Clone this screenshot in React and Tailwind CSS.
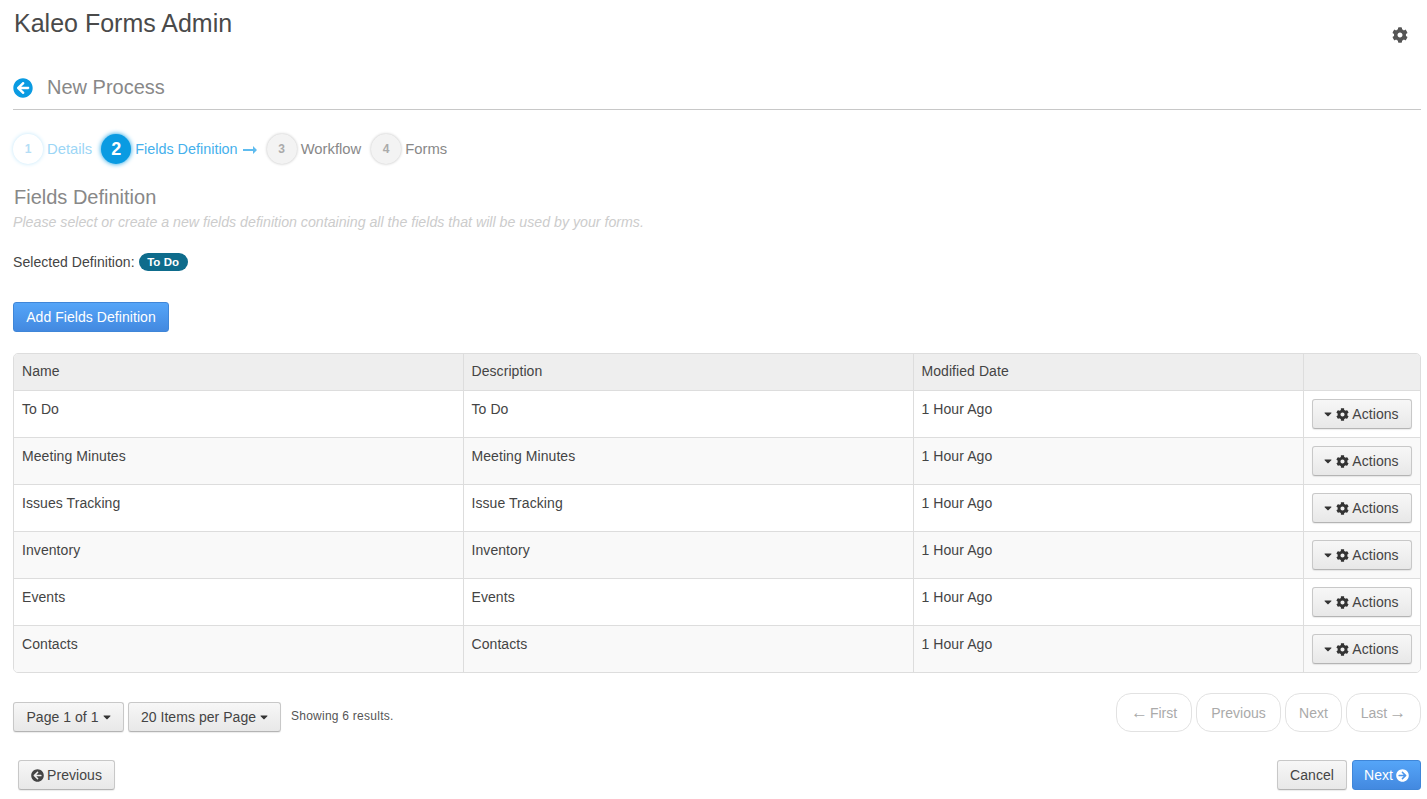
import { FaArrowCircleLeft, FaArrowCircleRight, FaCaretDown, FaCog } from "react-icons/fa";

const rows = [
  ["To Do", "To Do"],
  ["Meeting Minutes", "Meeting Minutes"],
  ["Issues Tracking", "Issue Tracking"],
  ["Inventory", "Inventory"],
  ["Events", "Events"],
  ["Contacts", "Contacts"],
];

const grayBtn =
  "flex items-center h-[30px] rounded-[3px] border border-[#c8c8c8] border-b-[#b4b4b4] bg-gradient-to-b from-[#f7f7f7] to-[#e8e8e8] text-[14px] tracking-[0.05px] text-[#444] shadow-[0_1px_1px_rgba(0,0,0,0.08)]";

const blueBtn =
  "flex items-center h-[30px] rounded-[3px] border border-[#3f86d8] bg-gradient-to-b from-[#55a5f8] to-[#4389e0] text-[14px] text-white";

function Step({ num, label, done, active }) {
  if (active) {
    return (
      <div className="flex items-center">
        <span className="flex h-[30px] w-[30px] items-center justify-center rounded-full bg-[#0a9be2] text-[18px] font-bold text-white shadow-[0_0_5px_#0a9be2]">
          {num}
        </span>
        <span className="ml-[4px] pt-[1px] text-[14.4px] text-[#45b0ec]">{label}</span>
        <svg className="ml-[5px] mr-[10px] mt-[2px] h-[8px] w-[14px]" viewBox="0 0 14 8" fill="#5fbcef">
          <path d="M0 3h10V0l4 4-4 4V5H0z" />
        </svg>
      </div>
    );
  }
  return (
    <div className="flex items-center">
      <span
        className={
          done
            ? "flex h-[30px] w-[30px] items-center justify-center rounded-full bg-white text-[12px] font-bold text-[#b5def6] shadow-[0_0_4px_#bfe6fa]"
            : "flex h-[30px] w-[30px] items-center justify-center rounded-full bg-[#f3f3f3] text-[12px] font-bold text-[#aaa] shadow-[0_0_3px_#bbb]"
        }
      >
        {num}
      </span>
      <span className={done ? "ml-[4px] mr-[9px] text-[14.8px] text-[#9cd6f6]" : "ml-[4px] mr-[10px] text-[14.8px] text-[#888]"}>
        {label}
      </span>
    </div>
  );
}

function PageLink({ children, w }) {
  return (
    <span className={`flex h-[39px] items-center justify-center rounded-[15px] border border-[#e2e2e2] pt-[1px] text-[14px] text-[#aaa] ${w}`}>
      {children}
    </span>
  );
}

export default function App() {
  return (
    <div className="h-[799px] overflow-hidden bg-white pl-[13px] pr-[6px] font-['Liberation_Sans',Arial,sans-serif] text-[#444]">
      <div className="flex justify-between">
        <h1 className="ml-[1px] mt-[8px] text-[25px] leading-[30px] text-[#4a4a4a]">Kaleo Forms Admin</h1>
        <FaCog className="mr-[13px] mt-[27px] text-[16px] text-[#555]" />
      </div>

      <div className="mt-[24px] flex h-[43px] items-center border-b border-[#c8c8c8]">
        <FaArrowCircleLeft className="text-[20px] text-[#0a9be2]" />
        <span className="mb-[2px] ml-[14px] text-[20px] text-[#888]">New Process</span>
      </div>

      <div className="mt-[24px] flex h-[30px] items-center">
        <Step num="1" label="Details" done />
        <Step num="2" label="Fields Definition" active />
        <Step num="3" label="Workflow" />
        <Step num="4" label="Forms" />
      </div>

      <h2 className="mt-[19px] pl-[1px] text-[20px] leading-[28px] text-[#888]">Fields Definition</h2>
      <p className="mt-[1px] text-[14.2px] italic leading-[20px] text-[#ccc]">
        Please select or create a new fields definition containing all the fields that will be used by your forms.
      </p>

      <div className="mt-[20px] flex h-[20px] items-center text-[14px] tracking-[0.05px]">
        Selected Definition:
        <span className="ml-[4px] rounded-[9px] bg-[#0e6c8c] px-[8.5px] text-[11.5px] font-bold leading-[18px] text-white">To Do</span>
      </div>

      <button className={`${blueBtn} mt-[30px] w-[156px] justify-center tracking-[0.06px]`}>Add Fields Definition</button>

      <div className="mt-[21px] overflow-hidden rounded-[5px] border border-[#ddd]">
        <table className="w-full table-fixed border-collapse text-[14px] tracking-[0.07px]">
          <thead>
            <tr className="h-[36px] bg-[#eee] text-left">
              <th className="w-[449px] px-[8px] font-normal">Name</th>
              <th className="w-[450px] border-l border-[#ddd] px-[8px] font-normal">Description</th>
              <th className="w-[390px] border-l border-[#ddd] px-[8px] font-normal">Modified Date</th>
              <th className="border-l border-[#ddd]"></th>
            </tr>
          </thead>
          <tbody>
            {rows.map((row, i) => (
              <tr key={row[0]} className={i % 2 === 0 ? "h-[47px] border-t border-[#ddd] bg-white" : "h-[47px] border-t border-[#ddd] bg-[#f9f9f9]"}>
                <td className="px-[8px] pb-[9px] pt-[8px] align-top leading-[20px]">{row[0]}</td>
                <td className="border-l border-[#ddd] px-[8px] pb-[9px] pt-[8px] align-top leading-[20px]">{row[1]}</td>
                <td className="border-l border-[#ddd] px-[8px] pb-[9px] pt-[8px] align-top leading-[20px]">1 Hour Ago</td>
                <td className="border-l border-[#ddd] px-[8px] align-middle">
                  <button className={`${grayBtn} w-[100px] justify-center pt-[1px]`}>
                    <FaCaretDown className="mr-[4px] h-[12px] w-[8px] text-[#333]" />
                    <FaCog className="mr-[3px] text-[13px] text-[#333]" />
                    Actions
                  </button>
                </td>
              </tr>
            ))}
          </tbody>
        </table>
      </div>

      <div className="mt-[20px] flex items-start justify-between">
        <div className="mt-[9px] flex items-center">
          <button className={`${grayBtn} w-[111px] justify-center`}>
            Page 1 of 1
            <FaCaretDown className="ml-[4px] h-[12px] w-[8px] text-[#333]" />
          </button>
          <button className={`${grayBtn} ml-[4px] w-[153px] justify-center`}>
            20 Items per Page
            <FaCaretDown className="ml-[4px] h-[12px] w-[8px] text-[#333]" />
          </button>
          <span className="mb-[2px] ml-[10px] text-[12px] tracking-[0.25px] text-[#555]">Showing 6 results.</span>
        </div>
        <div className="flex gap-[4px]">
          <PageLink w="w-[76px]"><span className="mb-[2px] mr-[2px] text-[17px] leading-none">←</span>First</PageLink>
          <PageLink w="w-[85px]">Previous</PageLink>
          <PageLink w="w-[57px]">Next</PageLink>
          <PageLink w="w-[75px]">Last<span className="mb-[2px] ml-[2px] text-[17px] leading-none">→</span></PageLink>
        </div>
      </div>

      <div className="mt-[28px] flex justify-between pl-[5px]">
        <button className={`${grayBtn} w-[97px] justify-center`}>
          <FaArrowCircleLeft className="mr-[3px] text-[13px] text-[#444]" />
          Previous
        </button>
        <div className="flex gap-[5px]">
          <button className={`${grayBtn} w-[70px] justify-center text-[#333]`}>Cancel</button>
          <button className={`${blueBtn} w-[69px] justify-center`}>
            Next
            <FaArrowCircleRight className="ml-[3px] text-[13px]" />
          </button>
        </div>
      </div>
    </div>
  );
}
